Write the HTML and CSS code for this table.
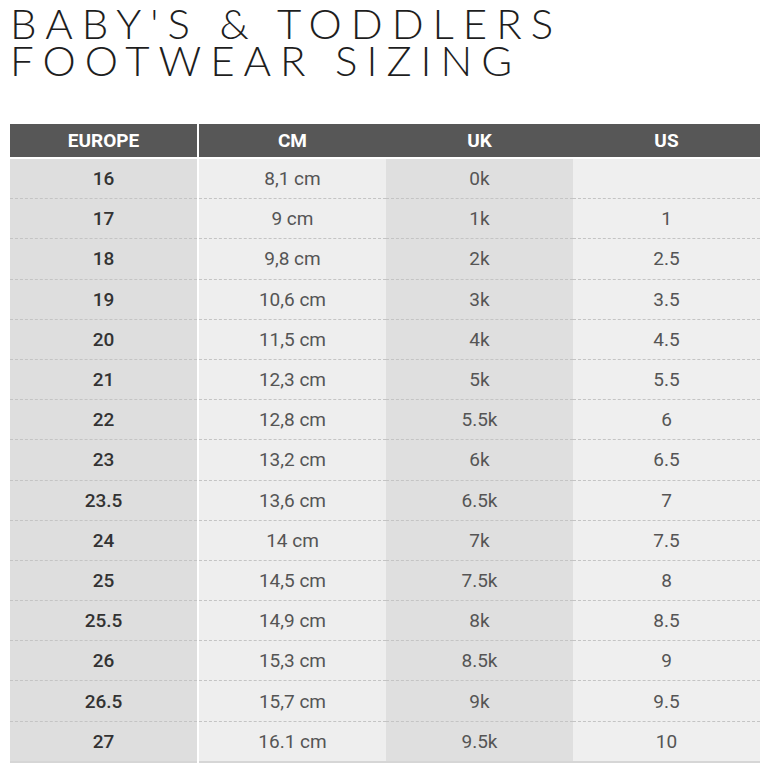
FILE: index.html
```html
<!DOCTYPE html>
<html>
<head>
<meta charset="utf-8">
<link rel="stylesheet" href="styles.css">
</head>
<body>
<div class="page">
  <h1 class="title"><span class="title-line">BABY'S &amp; TODDLERS</span><span class="title-line">FOOTWEAR SIZING</span></h1>
  <table class="chart">
    <thead>
      <tr><th class="c-eu">EUROPE</th><th>CM</th><th>UK</th><th>US</th></tr>
    </thead>
    <tbody>
      <tr><td class="c-eu">16</td><td class="c-cm">8,1 cm</td><td class="c-uk">0k</td><td class="c-us"></td></tr>
      <tr><td class="c-eu">17</td><td class="c-cm">9 cm</td><td class="c-uk">1k</td><td class="c-us">1</td></tr>
      <tr><td class="c-eu">18</td><td class="c-cm">9,8 cm</td><td class="c-uk">2k</td><td class="c-us">2.5</td></tr>
      <tr><td class="c-eu">19</td><td class="c-cm">10,6 cm</td><td class="c-uk">3k</td><td class="c-us">3.5</td></tr>
      <tr><td class="c-eu">20</td><td class="c-cm">11,5 cm</td><td class="c-uk">4k</td><td class="c-us">4.5</td></tr>
      <tr><td class="c-eu">21</td><td class="c-cm">12,3 cm</td><td class="c-uk">5k</td><td class="c-us">5.5</td></tr>
      <tr><td class="c-eu">22</td><td class="c-cm">12,8 cm</td><td class="c-uk">5.5k</td><td class="c-us">6</td></tr>
      <tr><td class="c-eu">23</td><td class="c-cm">13,2 cm</td><td class="c-uk">6k</td><td class="c-us">6.5</td></tr>
      <tr><td class="c-eu">23.5</td><td class="c-cm">13,6 cm</td><td class="c-uk">6.5k</td><td class="c-us">7</td></tr>
      <tr><td class="c-eu">24</td><td class="c-cm">14 cm</td><td class="c-uk">7k</td><td class="c-us">7.5</td></tr>
      <tr><td class="c-eu">25</td><td class="c-cm">14,5 cm</td><td class="c-uk">7.5k</td><td class="c-us">8</td></tr>
      <tr><td class="c-eu">25.5</td><td class="c-cm">14,9 cm</td><td class="c-uk">8k</td><td class="c-us">8.5</td></tr>
      <tr><td class="c-eu">26</td><td class="c-cm">15,3 cm</td><td class="c-uk">8.5k</td><td class="c-us">9</td></tr>
      <tr><td class="c-eu">26.5</td><td class="c-cm">15,7 cm</td><td class="c-uk">9k</td><td class="c-us">9.5</td></tr>
      <tr><td class="c-eu">27</td><td class="c-cm">16.1 cm</td><td class="c-uk">9.5k</td><td class="c-us">10</td></tr>
    </tbody>
  </table>
</div>
</body>
</html>
```
FILE: styles.css
```css
html, body { margin: 0; padding: 0; background: #ffffff; }
.page { padding: 0 8px 0 10px; }
.title {
  margin: 0;
  padding-top: 5px;
  font-family: "Lato", "DejaVu Sans", sans-serif;
  font-weight: 300;
  font-size: 42px;
  color: #1e1e1e;
}
.title-line {
  display: block;
  line-height: 37px;
  letter-spacing: 9px;
  white-space: nowrap;
}
.chart {
  margin-top: 45px;
  width: 750px;
  border-collapse: collapse;
  table-layout: fixed;
  font-family: "Roboto", "DejaVu Sans", sans-serif;
  border-bottom: 2px solid #d6d6d6;
}
.chart th {
  background: #575757;
  color: #ffffff;
  font-size: 19px;
  font-weight: bold;
  height: 33px;
  padding: 0;
  text-align: center;
  border-bottom: 2px solid #ffffff;
  width: 25%;
}
.chart th.c-eu { border-right: 2px solid #ffffff; }
.chart td {
  height: 39.2px;
  padding: 0;
  text-align: center;
  font-size: 19px;
  color: #555555;
  border-bottom: 1px dashed #c4c4c4;
}
.chart tbody tr:last-child td { border-bottom: none; }
.chart td.c-eu { background: #dedede; color: #333333; font-weight: 500; border-right: 2px solid #ffffff; }
.chart td.c-cm { background: #eeeeee; }
.chart td.c-uk { background: #dfdfdf; }
.chart td.c-us { background: #efefef; }
```
